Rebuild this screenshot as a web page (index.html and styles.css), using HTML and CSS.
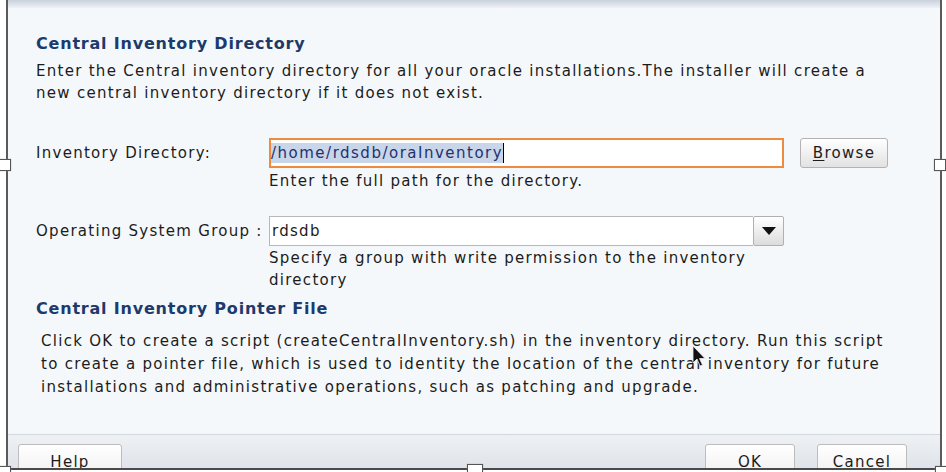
FILE: index.html
```html
<!DOCTYPE html>
<html>
<head>
<meta charset="utf-8">
<link rel="stylesheet" href="styles.css">
</head>
<body>
<div class="window">
  <div class="topbar"></div>
  <div class="content">
    <h2 class="heading">Central Inventory Directory</h2>
    <p class="desc">Enter the Central inventory directory for all your oracle installations.The installer will create a<br>new central inventory directory if it does not exist.</p>

    <div class="form">
      <div class="label">Inventory Directory:</div>
      <div class="field">
        <div class="input focused"><span class="sel">/home/rdsdb/oraInventory</span><span class="caret"></span></div>
        <div class="hint">Enter the full path for the directory.</div>
      </div>
      <div class="side"><button class="btn browse"><u>B</u>rowse</button></div>

      <div class="label row2">Operating System Group :</div>
      <div class="field row2">
        <div class="combo">
          <div class="combo-text">rdsdb</div>
          <div class="combo-btn"><svg width="14" height="8" viewBox="0 0 14 8"><path d="M0 0 H14 L7 8 Z" fill="#111"/></svg></div>
        </div>
        <div class="hint narrow">Specify a group with write permission to the inventory directory</div>
      </div>
    </div>

    <h2 class="heading h2b">Central Inventory Pointer File</h2>
    <p class="desc indent">Click OK to create a script (createCentralInventory.sh) in the inventory directory. Run this script<br>to create a pointer file, which is used to identity the location of the central inventory for future<br>installations and administrative operations, such as patching and upgrade.</p>
  </div>
  <div class="footer">
    <button class="btn fbtn help"><u>H</u>elp</button>
    <div class="spacer"></div>
    <button class="btn fbtn"><u>O</u>K</button>
    <button class="btn fbtn">Cancel</button>
  </div>
</div>
<div class="handle h-left"></div>
<div class="handle h-right"></div>
<div class="handle h-bottom"></div>
<div class="handle h-bl"></div>
<div class="handle h-br"></div>
<svg class="cursor" width="14" height="24" viewBox="0 0 14 24"><path d="M1 1 L1 18 L5 14 L8 21 L10.5 20 L7.5 13.5 L13 13.5 Z" fill="#111" stroke="#eee" stroke-width="0.8"/></svg>
</body>
</html>
```

FILE: styles.css
```css
html, body {
  margin: 0;
  padding: 0;
}
body {
  width: 946px;
  height: 472px;
  overflow: hidden;
  background: #ffffff;
  position: relative;
  font-family: "DejaVu Sans", Verdana, sans-serif;
  color: #1c1c1c;
}
.window {
  margin-left: 6px;
  width: 932px;
  height: 468px;
  border-left: 2px solid #5a5a5a;
  border-right: 2px solid #5a5a5a;
  border-bottom: 2px solid #4a4a4a;
  background: #f5f8fa;
  display: flex;
  flex-direction: column;
}
.topbar {
  height: 8px;
  background: linear-gradient(#c9d1dc, #eef2f6);
}
.content {
  flex: 1;
  padding: 26px 0 0 28px;
}
.heading {
  margin: 0;
  font-size: 16px;
  line-height: 20px;
  font-weight: bold;
  letter-spacing: 0.8px;
  color: #1d3a6c;
}
.desc {
  margin: 6px 0 0 0;
  font-size: 15px;
  line-height: 22px;
  letter-spacing: 1.28px;
  color: #1c1c1c;
}
.form {
  margin-top: 34px;
  display: grid;
  grid-template-columns: 217px 515px 88px;
  column-gap: 16px;
  font-size: 15px;
  letter-spacing: 1.28px;
}
.label {
  height: 30px;
  line-height: 30px;
  white-space: nowrap;
}
.label.row2, .field.row2 {
  margin-top: 24px;
}
.input {
  height: 30px;
  box-sizing: border-box;
  background: #fff;
  border: 1px solid #ccc;
  display: flex;
  align-items: center;
  padding-left: 0;
}
.input.focused {
  border: 2px solid #ef8b3e;
}
.sel {
  background: #c9d5e8;
  color: #1e3270;
  line-height: 20px;
  letter-spacing: 1.5px;
}
.caret {
  display: inline-block;
  width: 1px;
  height: 20px;
  background: #000;
}
.hint {
  margin-top: 2px;
  line-height: 22px;
}
.hint.narrow {
  width: 484px;
  margin-top: 1px;
}
.combo {
  height: 30px;
  display: flex;
}
.combo-text {
  flex: 1;
  box-sizing: border-box;
  background: #fff;
  border: 1px solid #b8b8b8;
  border-right: none;
  padding-left: 2px;
  line-height: 28px;
}
.combo-btn {
  width: 31px;
  box-sizing: border-box;
  border: 1px solid #b0b0b0;
  border-radius: 2px;
  background: linear-gradient(#ffffff, #dcdcdc);
  display: flex;
  align-items: center;
  justify-content: center;
}
.btn {
  font-family: "DejaVu Sans", Verdana, sans-serif;
  font-size: 15px;
  letter-spacing: 1.28px;
  color: #1c1c1c;
  border: 1px solid #b3b3b3;
  border-radius: 3px;
  background: linear-gradient(#ffffff, #e2e2e2);
  padding: 0;
}
.btn u {
  text-decoration-thickness: 1px;
  text-underline-offset: 2px;
}
.browse {
  width: 88px;
  height: 30px;
}
.h2b {
  margin-top: 8px;
}
.indent {
  margin-top: 11px;
  padding-left: 5px;
  line-height: 23px;
}
.footer {
  height: 34px;
  box-sizing: border-box;
  border-top: 1px solid #d3d7dc;
  background: linear-gradient(#eef1f4, #dfe4ea);
  display: flex;
  align-items: flex-start;
  padding: 9px 33px 0 10px;
  gap: 22px;
  overflow: hidden;
}
.spacer {
  flex: 1;
}
.fbtn {
  width: 90px;
  height: 34px;
  padding-bottom: 0;
  padding-top: 1px;
  flex: none;
  border-color: #bcbcbc;
  background: linear-gradient(#ffffff, #f0f0f0);
}
.fbtn.help {
  width: 104px;
}
.handle {
  position: absolute;
  width: 10px;
  height: 10px;
  background: #fff;
  border: 1px solid #555;
  box-shadow: 0 0 1px #999;
}
.h-left { left: -1px; top: 159px; }
.h-right { left: 934px; top: 159px; }
.h-bottom { left: 467px; top: 464px; width: 14px; }
.h-bl { left: -1px; top: 466px; }
.h-br { left: 935px; top: 466px; }
.cursor {
  position: absolute;
  left: 692px;
  top: 345px;
}
```
